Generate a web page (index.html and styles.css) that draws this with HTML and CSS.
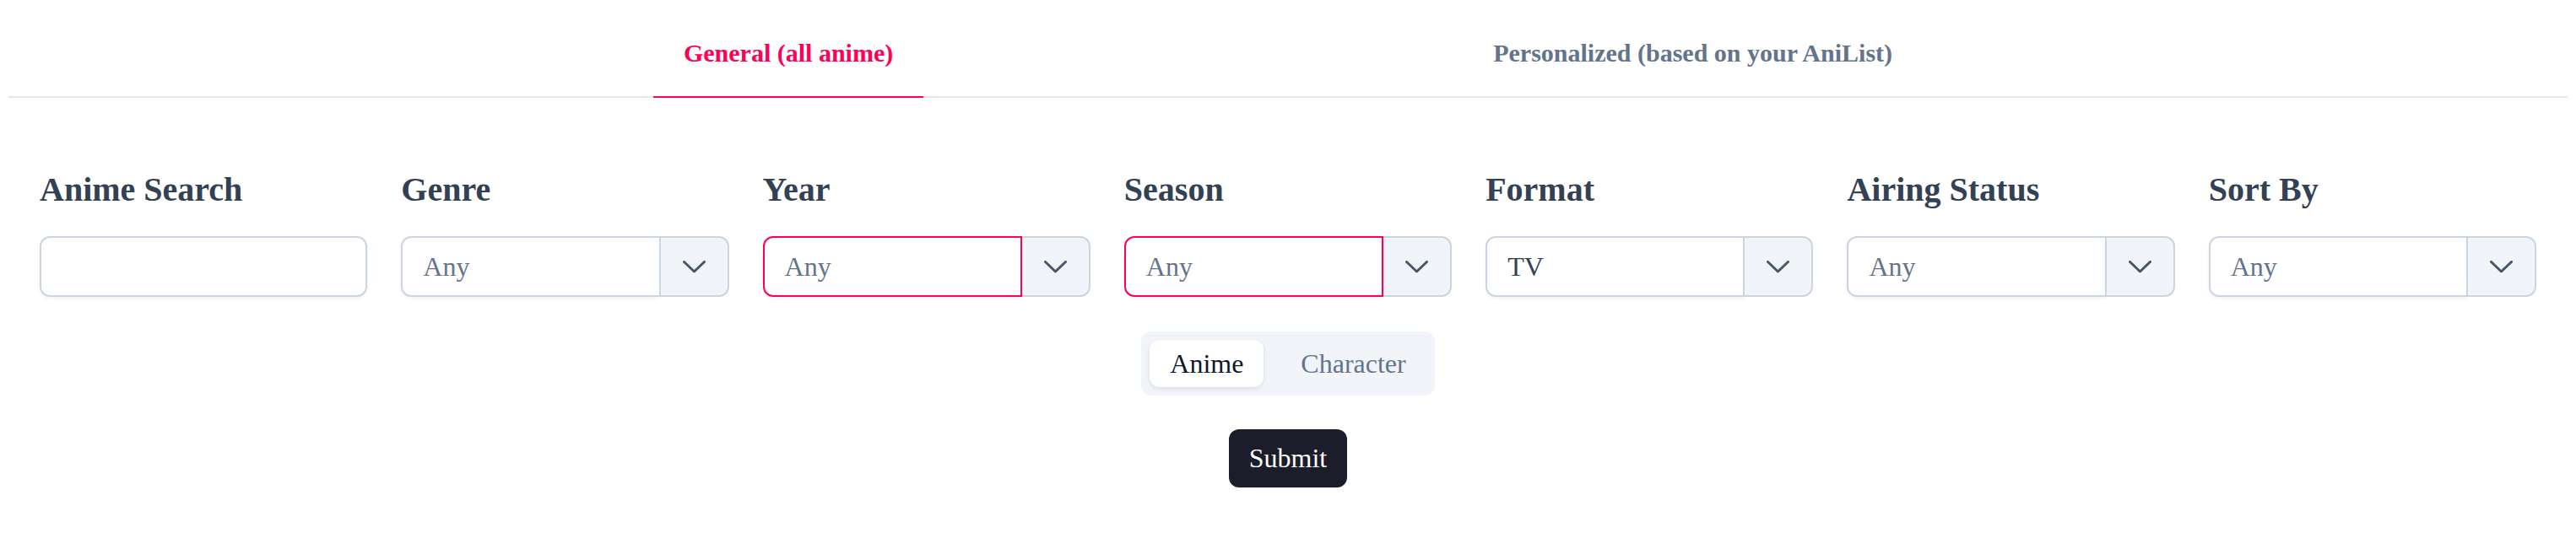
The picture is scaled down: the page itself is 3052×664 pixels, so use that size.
FILE: index.html
```html
<!DOCTYPE html>
<html lang="en">
<head>
    <meta charset="UTF-8">
    <meta name="viewport" content="width=device-width, initial-scale=1.0">
    <title>Anime Recommendations</title>
    <link rel="stylesheet" href="styles.css">
</head>
<body>
    <!-- Mode tabs -->
    <nav class="tabs">
        <button class="tab active">General (all anime)</button>
        <button class="tab">Personalized (based on your AniList)</button>
    </nav>

    <main class="filters">
        <section class="filter-grid">
            <div class="field">
                <label class="field-label" for="search">Anime Search</label>
                <input type="text" id="search" class="search-input">
            </div>
            <div class="field">
                <label class="field-label">Genre</label>
                <div class="select">
                    <select class="select-field"><option>Any</option></select>
                    <span class="select-arrow"><svg width="27" height="15" viewBox="0 0 27 15"><polyline points="1.5,1.5 13.5,13 25.5,1.5" fill="none" stroke="#475569" stroke-width="3" stroke-linecap="round" stroke-linejoin="round"/></svg></span>
                </div>
            </div>
            <div class="field">
                <label class="field-label">Year</label>
                <div class="select">
                    <select class="select-field invalid"><option>Any</option></select>
                    <span class="select-arrow"><svg width="27" height="15" viewBox="0 0 27 15"><polyline points="1.5,1.5 13.5,13 25.5,1.5" fill="none" stroke="#475569" stroke-width="3" stroke-linecap="round" stroke-linejoin="round"/></svg></span>
                </div>
            </div>
            <div class="field">
                <label class="field-label">Season</label>
                <div class="select">
                    <select class="select-field invalid"><option>Any</option></select>
                    <span class="select-arrow"><svg width="27" height="15" viewBox="0 0 27 15"><polyline points="1.5,1.5 13.5,13 25.5,1.5" fill="none" stroke="#475569" stroke-width="3" stroke-linecap="round" stroke-linejoin="round"/></svg></span>
                </div>
            </div>
            <div class="field">
                <label class="field-label">Format</label>
                <div class="select">
                    <select class="select-field chosen"><option>TV</option></select>
                    <span class="select-arrow"><svg width="27" height="15" viewBox="0 0 27 15"><polyline points="1.5,1.5 13.5,13 25.5,1.5" fill="none" stroke="#475569" stroke-width="3" stroke-linecap="round" stroke-linejoin="round"/></svg></span>
                </div>
            </div>
            <div class="field">
                <label class="field-label">Airing Status</label>
                <div class="select">
                    <select class="select-field"><option>Any</option></select>
                    <span class="select-arrow"><svg width="27" height="15" viewBox="0 0 27 15"><polyline points="1.5,1.5 13.5,13 25.5,1.5" fill="none" stroke="#475569" stroke-width="3" stroke-linecap="round" stroke-linejoin="round"/></svg></span>
                </div>
            </div>
            <div class="field">
                <label class="field-label">Sort By</label>
                <div class="select">
                    <select class="select-field"><option>Any</option></select>
                    <span class="select-arrow"><svg width="27" height="15" viewBox="0 0 27 15"><polyline points="1.5,1.5 13.5,13 25.5,1.5" fill="none" stroke="#475569" stroke-width="3" stroke-linecap="round" stroke-linejoin="round"/></svg></span>
                </div>
            </div>
        </section>

        <!-- Search target toggle -->
        <div class="mode-toggle">
            <button class="mode active">Anime</button>
            <button class="mode">Character</button>
        </div>

        <button class="submit">Submit</button>
    </main>
</body>
</html>
```

FILE: styles.css
```css
body {
    margin: 0;
    font-family: "Liberation Serif", "Times New Roman", serif;
    background-color: #fff;
    color: #334155;
}

.tabs {
    display: flex;
    justify-content: center;
    gap: 639px;
    margin: 0 10px;
    border-bottom: 2px solid #e2e8f0;
}

.tab {
    margin-bottom: -2px;
    padding: 45px 36px 34px;
    background: none;
    border: none;
    border-bottom: 2px solid transparent;
    font-family: inherit;
    font-size: 30px;
    font-weight: bold;
    line-height: 35px;
    color: #64748b;
    cursor: pointer;
}

.tab.active {
    color: #ff0055;
    border-bottom-color: #ff0055;
}

.filters {
    padding: 86px 47px 0;
}

.filter-grid {
    display: grid;
    grid-template-columns: repeat(7, minmax(0, 1fr));
    gap: 40px;
}

.field-label {
    display: block;
    margin-bottom: 32px;
    font-size: 40px;
    font-weight: bold;
    line-height: 46px;
    color: #334155;
}

.search-input {
    box-sizing: border-box;
    display: block;
    width: 100%;
    height: 72px;
    margin: 0;
    padding: 0 24px;
    border: 2px solid #cbd5e1;
    border-radius: 12px;
    box-shadow: 0 2px 4px rgba(15, 23, 42, 0.05);
    font-family: inherit;
    font-size: 32px;
    outline: none;
}

.select {
    display: flex;
    height: 72px;
}

.select-field {
    box-sizing: border-box;
    flex: 1;
    min-width: 0;
    height: 72px;
    margin: 0;
    padding: 0 24px;
    appearance: none;
    -webkit-appearance: none;
    background: #fff;
    border: 2px solid #cbd5e1;
    border-radius: 12px 0 0 12px;
    box-shadow: 0 2px 4px rgba(15, 23, 42, 0.05);
    font-family: inherit;
    font-size: 32px;
    color: #64748b;
    outline: none;
}

.select-field.invalid {
    border-color: #ff0055;
}

.select-field.chosen {
    color: #334155;
}

.select-arrow {
    box-sizing: border-box;
    display: flex;
    align-items: center;
    justify-content: center;
    width: 81px;
    height: 72px;
    background: #f1f5f9;
    border: 2px solid #cbd5e1;
    border-left: none;
    border-radius: 0 12px 12px 0;
}

.mode-toggle {
    display: flex;
    gap: 20px;
    width: fit-content;
    margin: 41px auto 0;
    padding: 10px;
    background: #f1f5f9;
    border-radius: 12px;
}

.mode {
    height: 56px;
    padding: 0 24px;
    background: none;
    border: none;
    border-radius: 12px;
    font-family: inherit;
    font-size: 32px;
    color: #64748b;
    cursor: pointer;
}

.mode.active {
    background: #fff;
    color: #0f172a;
    box-shadow: 0 2px 5px rgba(15, 23, 42, 0.1);
}

.submit {
    display: block;
    height: 69px;
    margin: 40px auto 0;
    padding: 0 24px;
    background: #1c1d2a;
    border: none;
    border-radius: 12px;
    font-family: inherit;
    font-size: 32px;
    color: #fff;
    cursor: pointer;
}
```
